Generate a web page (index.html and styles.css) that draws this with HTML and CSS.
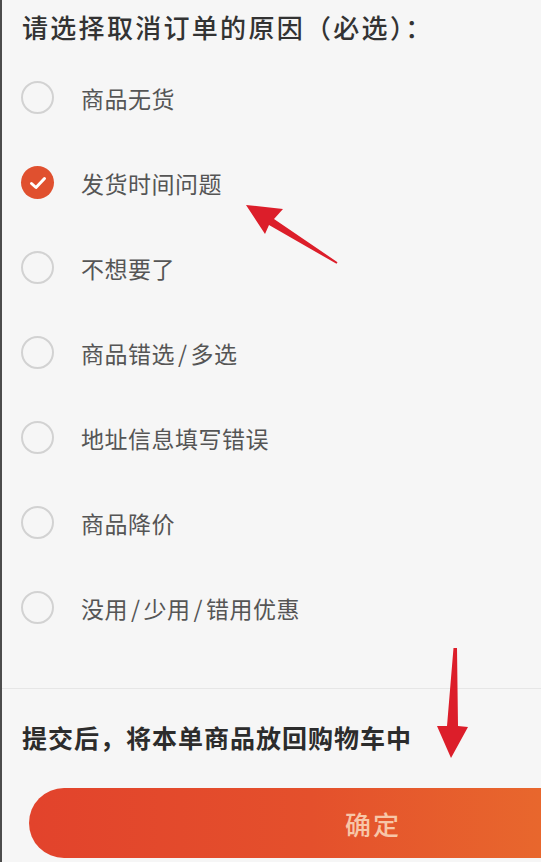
FILE: index.html
```html
<!DOCTYPE html>
<html lang="zh-CN">
<head>
<meta charset="utf-8">
<title>取消订单</title>
<link rel="stylesheet" href="styles.css">
</head>
<body>
<div class="page">
  <div class="title">请选择取消订单的原因（必选）：</div>
  <ul class="reasons">
    <li class="reason"><span class="radio"></span><span class="label">商品无货</span></li>
    <li class="reason"><span class="radio checked"><svg viewBox="0 0 32 32" width="32" height="32"><polyline points="9.5,16.5 14,20.5 22.5,11.5" fill="none" stroke="#fff" stroke-width="3" stroke-linecap="round" stroke-linejoin="round"/></svg></span><span class="label">发货时间问题</span></li>
    <li class="reason"><span class="radio"></span><span class="label">不想要了</span></li>
    <li class="reason"><span class="radio"></span><span class="label">商品错选<span class="slash">/</span>多选</span></li>
    <li class="reason"><span class="radio"></span><span class="label">地址信息填写错误</span></li>
    <li class="reason"><span class="radio"></span><span class="label">商品降价</span></li>
    <li class="reason"><span class="radio"></span><span class="label">没用<span class="slash">/</span>少用<span class="slash">/</span>错用优惠</span></li>
  </ul>
  <div class="divider"></div>
  <div class="note">提交后，将本单商品放回购物车中</div>
  <div class="confirm">确定</div>
</div>
<svg class="annotations" width="541" height="862" viewBox="0 0 541 862">
  <polygon points="246,205 283,209 274,219 337.5,262.2 336.5,263.8 269,225 265,234" fill="#dc1e2a"/>
  <polygon points="453.5,648 457,648 458,726 468,727 451,758 437,726 447,726" fill="#dc1e2a"/>
</svg>
</body>
</html>
```

FILE: styles.css
```css
html, body {
  margin: 0;
  padding: 0;
  overflow: hidden;
}

body {
  width: 541px;
  height: 862px;
  background: #f6f6f6;
  font-family: "Noto Sans CJK SC", "Noto Sans", sans-serif;
  position: relative;
}

.page {
  border-left: 2px solid #4c4c4c;
  height: 862px;
  box-sizing: border-box;
  overflow: hidden;
}

.title {
  padding: 9px 0 10px 20px;
  font-size: 26px;
  line-height: 36px;
  letter-spacing: 2.3px;
  color: #333;
  font-weight: 500;
  white-space: nowrap;
}

.reasons {
  list-style: none;
  margin: 0;
  padding: 0;
}

.reason {
  height: 85px;
  display: flex;
  align-items: center;
  padding-left: 19px;
}

.radio {
  width: 33px;
  height: 33px;
  box-sizing: border-box;
  border: 2px solid #d2d2d2;
  border-radius: 50%;
  flex: none;
  display: flex;
  align-items: center;
  justify-content: center;
}

.radio.checked {
  border: none;
  background: #e0502f;
}

.label {
  margin-left: 27px;
  font-size: 23px;
  letter-spacing: 0.5px;
  color: #555;
  line-height: 32px;
}

.slash {
  margin: 0 3px;
}

.divider {
  margin-top: 38px;
  height: 1px;
  background: #e6e6e6;
}

.note {
  margin-top: 30px;
  padding-left: 20px;
  font-size: 25px;
  line-height: 36px;
  letter-spacing: 1px;
  font-weight: 700;
  color: #2c2c2c;
  white-space: nowrap;
}

.confirm {
  margin: 33px 0 0 27px;
  height: 70px;
  border-radius: 35px 0 0 35px;
  padding-left: 176px;
  box-sizing: border-box;
  background: linear-gradient(90deg, #e2432c 0%, #e4502c 55%, #e8672d 100%);
  color: #f7c6a8;
  font-size: 26px;
  letter-spacing: 2px;
  display: flex;
  align-items: center;
  justify-content: center;
  font-weight: 500;
}

.annotations {
  position: absolute;
  top: 0;
  left: 0;
  pointer-events: none;
}
```
